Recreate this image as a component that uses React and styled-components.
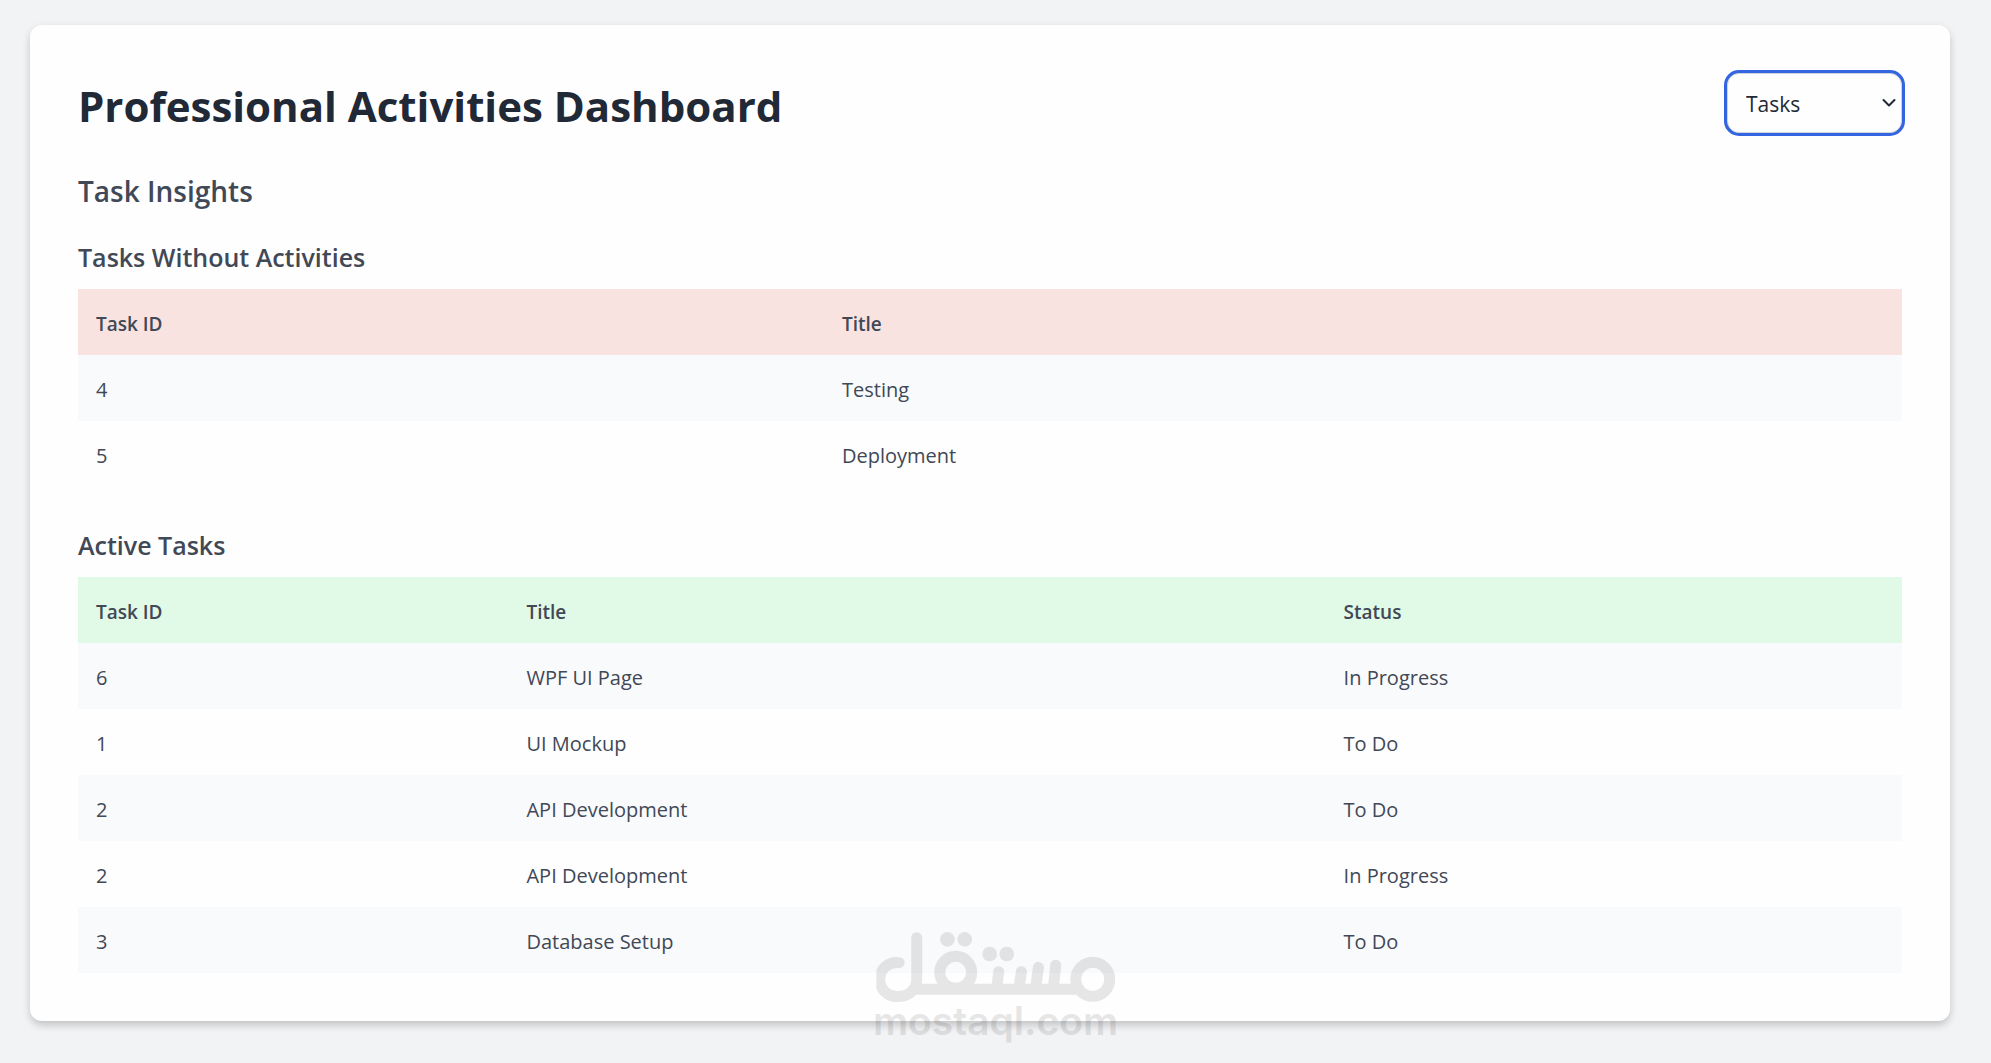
import React, { useState } from "react";
import styled, { createGlobalStyle } from "styled-components";

const GlobalStyle = createGlobalStyle`
  *, *::before, *::after { box-sizing: border-box; }
  body {
    margin: 0;
    background: #f2f3f5;
    color: #414856;
    font-family: "Segoe UI", "Open Sans", "Noto Sans", sans-serif;
    font-size: 20px;
    line-height: 30px;
  }
`;

const Page = styled.div`
  position: relative;
  min-height: 100vh;
  padding: 25px 41px 42px 30px;
`;

const Card = styled.main`
  padding: 48px;
  background: #fefefe;
  border-radius: 12px;
  box-shadow: 0 5px 8px -1px rgba(0, 0, 0, 0.16), 0 2px 10px rgba(0, 0, 0, 0.07);
`;

const Header = styled.header`
  display: flex;
  align-items: center;
  justify-content: space-between;
  margin-bottom: 38px;
`;

const Title = styled.h1`
  margin: 0;
  padding-top: 6px;
  color: #212936;
  font-size: 42px;
  font-weight: 700;
  line-height: 54px;
`;

const SelectWrap = styled.div`
  position: relative;
  width: 175px;
`;

const Select = styled.select`
  display: block;
  width: 100%;
  height: 60px;
  padding: 2px 18px 0;
  appearance: none;
  background: #fefefe;
  border: 1px solid #d1d5db;
  border-radius: 12px;
  outline: none;
  box-shadow: 0 0 0 3px #3465e0;
  color: #212936;
  font: inherit;
  font-size: 21px;
`;

const Chevron = styled.svg`
  position: absolute;
  top: 25px;
  right: 5px;
  width: 16px;
  height: 10px;
  pointer-events: none;
`;

const SectionTitle = styled.h2`
  margin: 0 0 28px;
  font-size: 28px;
  font-weight: 600;
  line-height: 40px;
`;

const Block = styled.section`
  & + & { margin-top: 40px; }
`;

const BlockTitle = styled.h3`
  margin: 0 0 14px;
  font-size: 25px;
  font-weight: 600;
  line-height: 36px;
`;

const Table = styled.table`
  width: 100%;
  table-layout: fixed;
  border-collapse: collapse;
  text-align: left;
`;

const Col = styled.col`
  width: ${(p) => p.$width};
`;

const HeadRow = styled.tr`
  background: ${(p) => (p.$tone === "red" ? "#f8e3e1" : "#e1fae8")};
`;

const HeadCell = styled.th`
  padding: 20px 18px 16px;
  font-size: 19px;
  font-weight: 600;
`;

const Row = styled.tr`
  &:nth-child(odd) { background: #f9fafc; }
`;

const Cell = styled.td`
  padding: 20px 18px 16px;
`;

const Watermark = styled.div`
  position: absolute;
  bottom: 24px;
  left: 50%;
  display: flex;
  flex-direction: column;
  align-items: center;
  transform: translateX(-50%);
  color: #000;
  opacity: 0.09;
  pointer-events: none;
`;

const Mark = styled.svg`
  display: block;
  width: 239px;
  height: 70px;
`;

const Domain = styled.span`
  font-family: Inter, "Liberation Sans", sans-serif;
  font-size: 39px;
  font-weight: 600;
  line-height: 37px;
`;

const withoutActivities = [
  [4, "Testing"],
  [5, "Deployment"],
];

const activeTasks = [
  [6, "WPF UI Page", "In Progress"],
  [1, "UI Mockup", "To Do"],
  [2, "API Development", "To Do"],
  [2, "API Development", "In Progress"],
  [3, "Database Setup", "To Do"],
];

function TaskTable({ title, tone, columns, widths, rows }) {
  return (
    <Block>
      <BlockTitle>{title}</BlockTitle>
      <Table aria-label={title}>
        <colgroup>
          {widths.map((w, i) => <Col key={i} $width={w} />)}
        </colgroup>
        <thead>
          <HeadRow $tone={tone}>
            {columns.map((c) => <HeadCell key={c} scope="col">{c}</HeadCell>)}
          </HeadRow>
        </thead>
        <tbody>
          {rows.map((row, i) => (
            <Row key={i}>
              {row.map((value, j) => <Cell key={j}>{value}</Cell>)}
            </Row>
          ))}
        </tbody>
      </Table>
    </Block>
  );
}

function MostaqlMark() {
  return (
    <Mark viewBox="78 66 717 210" fill="none" stroke="currentColor" strokeWidth="33" strokeLinecap="round" aria-hidden="true">
      <path d="M146 158a51 51 0 1 0 0 101c30 0 53-22 53-51V83" />
      <path d="M190 238H690" strokeLinecap="butt" />
      <circle cx="316" cy="187" r="48" />
      <path d="M445 185l-6 48M513 185l-7 48M564 172l-8 61M616 166l-7 67" />
      <circle cx="727" cy="208" r="51" />
      <g fill="currentColor" stroke="none">
        <circle cx="291" cy="88" r="22" />
        <circle cx="343" cy="88" r="22" />
        <circle cx="418" cy="132" r="22" />
        <circle cx="469" cy="132" r="22" />
      </g>
    </Mark>
  );
}

export default function App() {
  const [view, setView] = useState("Tasks");
  return (
    <Page>
      <GlobalStyle />
      <Card>
        <Header>
          <Title>Professional Activities Dashboard</Title>
          <SelectWrap>
            <Select aria-label="View" value={view} onChange={(e) => setView(e.target.value)}>
              <option>Tasks</option>
            </Select>
            <Chevron viewBox="0 0 16 10" fill="none" stroke="#212936" strokeWidth="2" strokeLinecap="round" strokeLinejoin="round" aria-hidden="true">
              <path d="M2.5 2l5.500 5.500L13.500 2" />
            </Chevron>
          </SelectWrap>
        </Header>
        <SectionTitle>Task Insights</SectionTitle>
        <TaskTable
          title="Tasks Without Activities"
          tone="red"
          columns={["Task ID", "Title"]}
          widths={["40.9%", "59.1%"]}
          rows={withoutActivities}
        />
        <TaskTable
          title="Active Tasks"
          tone="green"
          columns={["Task ID", "Title", "Status"]}
          widths={["23.6%", "44.8%", "31.6%"]}
          rows={activeTasks}
        />
      </Card>
      <Watermark>
        <MostaqlMark />
        <Domain>mostaql.com</Domain>
      </Watermark>
    </Page>
  );
}
